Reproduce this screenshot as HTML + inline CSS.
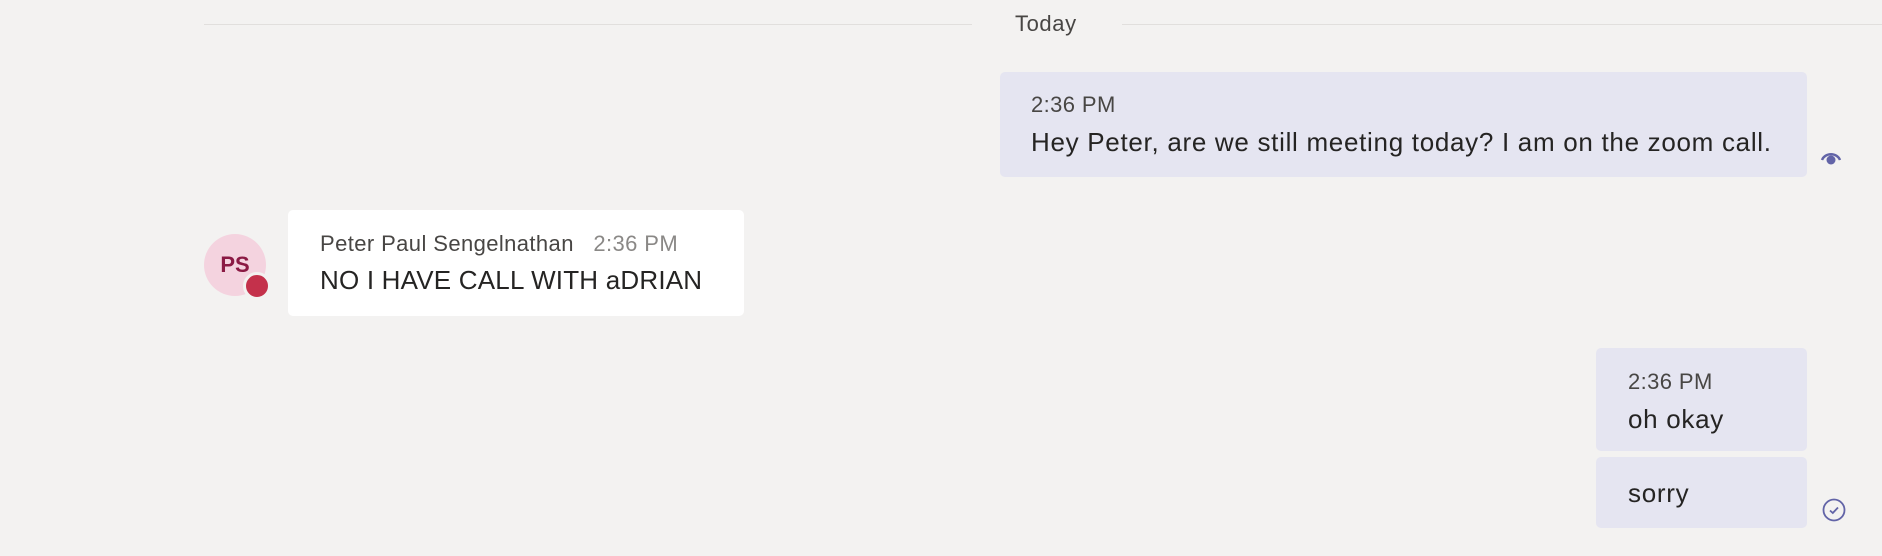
<!DOCTYPE html>
<html><head><meta charset="utf-8"><style>
body{margin:0;width:1882px;height:556px;background:#f3f2f1;position:relative;overflow:hidden;font-family:"Liberation Sans",sans-serif;color:#252423}
div{position:absolute}
.t{line-height:1;white-space:nowrap}
.b{font-size:26px;letter-spacing:0.7px}
.s{font-size:22px;letter-spacing:0.4px;color:#484644}
.me{background:#e5e5f1;border-radius:5px}
</style></head><body>
<div style="left:204px;top:24px;width:768px;height:1px;background:#e1dfdd"></div>
<div class="t s" style="left:1015px;top:13px;letter-spacing:0.6px">Today</div>
<div style="left:1122px;top:24px;width:760px;height:1px;background:#e1dfdd"></div>

<div class="me" style="left:1000px;top:72px;width:807px;height:105px"></div>
<div class="t s" style="left:1031px;top:94px">2:36 PM</div>
<div class="t b" style="left:1031px;top:129px">Hey Peter, are we still meeting today? I am on the zoom call.</div>
<svg style="position:absolute;left:1819px;top:146px" width="24" height="24" viewBox="0 0 24 24"><path d="M3 14 A9.5 8.5 0 0 1 21 14" fill="none" stroke="#6264a7" stroke-width="2.4"/><circle cx="12" cy="14" r="4.5" fill="#6264a7"/></svg>

<div style="left:204px;top:234px;width:62px;height:62px;border-radius:50%;background:#f4d3df"></div>
<div class="t" style="left:204px;top:254px;width:62px;text-align:center;font-size:22px;color:#8b1a44;font-weight:bold">PS</div>
<div style="left:243px;top:272px;width:22px;height:22px;border-radius:50%;background:#c4314b;border:3px solid #f3f2f1"></div>

<div style="left:288px;top:210px;width:456px;height:106px;background:#fff;border-radius:5px"></div>
<div class="t s" style="left:320px;top:233px">Peter Paul Sengelnathan&nbsp;&nbsp;&nbsp;<span style="color:#8a8886">2:36 PM</span></div>
<div class="t b" style="left:320px;top:267px;letter-spacing:0.2px">NO I HAVE CALL WITH aDRIAN</div>

<div class="me" style="left:1596px;top:348px;width:211px;height:103px"></div>
<div class="t s" style="left:1628px;top:371px">2:36 PM</div>
<div class="t b" style="left:1628px;top:406px">oh okay</div>
<div class="me" style="left:1596px;top:457px;width:211px;height:71px"></div>
<div class="t b" style="left:1628px;top:480px">sorry</div>
<svg style="position:absolute;left:1822px;top:498px" width="24" height="24" viewBox="0 0 24 24"><circle cx="12" cy="12" r="10.5" fill="none" stroke="#6264a7" stroke-width="1.8"/><path d="M8 12.5 L10.8 15 L16 9.5" fill="none" stroke="#6264a7" stroke-width="1.8"/></svg>
</body></html>
